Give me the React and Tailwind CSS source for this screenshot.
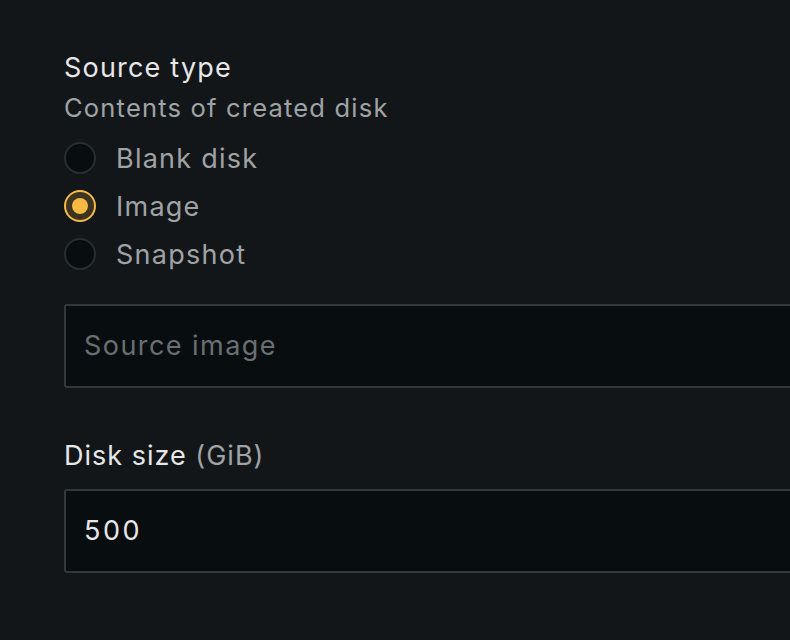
import React from "react";

function Radio({ label, checked }) {
  return (
    <label className="flex items-center h-[48px] gap-[20px]">
      {checked ? (
        <span className="w-[32px] h-[32px] rounded-full border-2 border-[#f5b944] bg-[#3c3321] flex items-center justify-center">
          <span className="w-[16px] h-[16px] rounded-full bg-[#f5b944]" />
        </span>
      ) : (
        <span className="w-[32px] h-[32px] rounded-full border-2 border-[#2a2e31] bg-[#080d10]" />
      )}
      <span className="text-[27px] tracking-[1.25px] text-[#a0a3a5] leading-none">{label}</span>
    </label>
  );
}

export default function App() {
  return (
    <div
      className="w-[790px] h-[640px] bg-[#121619] overflow-hidden pl-[64px] pt-[48px]"
      style={{ fontFamily: "Inter, 'Noto Sans', sans-serif" }}
    >
      <div className="w-[800px]">
        <div className="text-[27px] leading-[40px] tracking-[1.2px] text-[#e7e7e8]">Source type</div>
        <div className="mt-[2px] text-[25.5px] leading-[36px] text-[#a0a3a5] tracking-[1.2px]">Contents of created disk</div>
        <div className="flex flex-col mt-[8px]">
          <Radio label="Blank disk" />
          <Radio label="Image" checked />
          <Radio label="Snapshot" />
        </div>
        <div className="mt-[26px] h-[84px] rounded-[3px] border-2 border-[#33383b] bg-[#080d10] flex items-center pl-[18px]">
          <span className="text-[27px] tracking-[1.45px] text-[#6b6f72]">Source image</span>
        </div>
        <div className="mt-[48px] text-[27px] leading-[40px] tracking-[1px] text-[#e7e7e8]">
          Disk size <span className="text-[#a0a3a5]">(GiB)</span>
        </div>
        <div className="mt-[13px] h-[84px] rounded-[3px] border-2 border-[#33383b] bg-[#080d10] flex items-center pl-[18px]">
          <span className="text-[27px] tracking-[2.5px] text-[#e7e7e8]">500</span>
        </div>
      </div>
    </div>
  );
}
